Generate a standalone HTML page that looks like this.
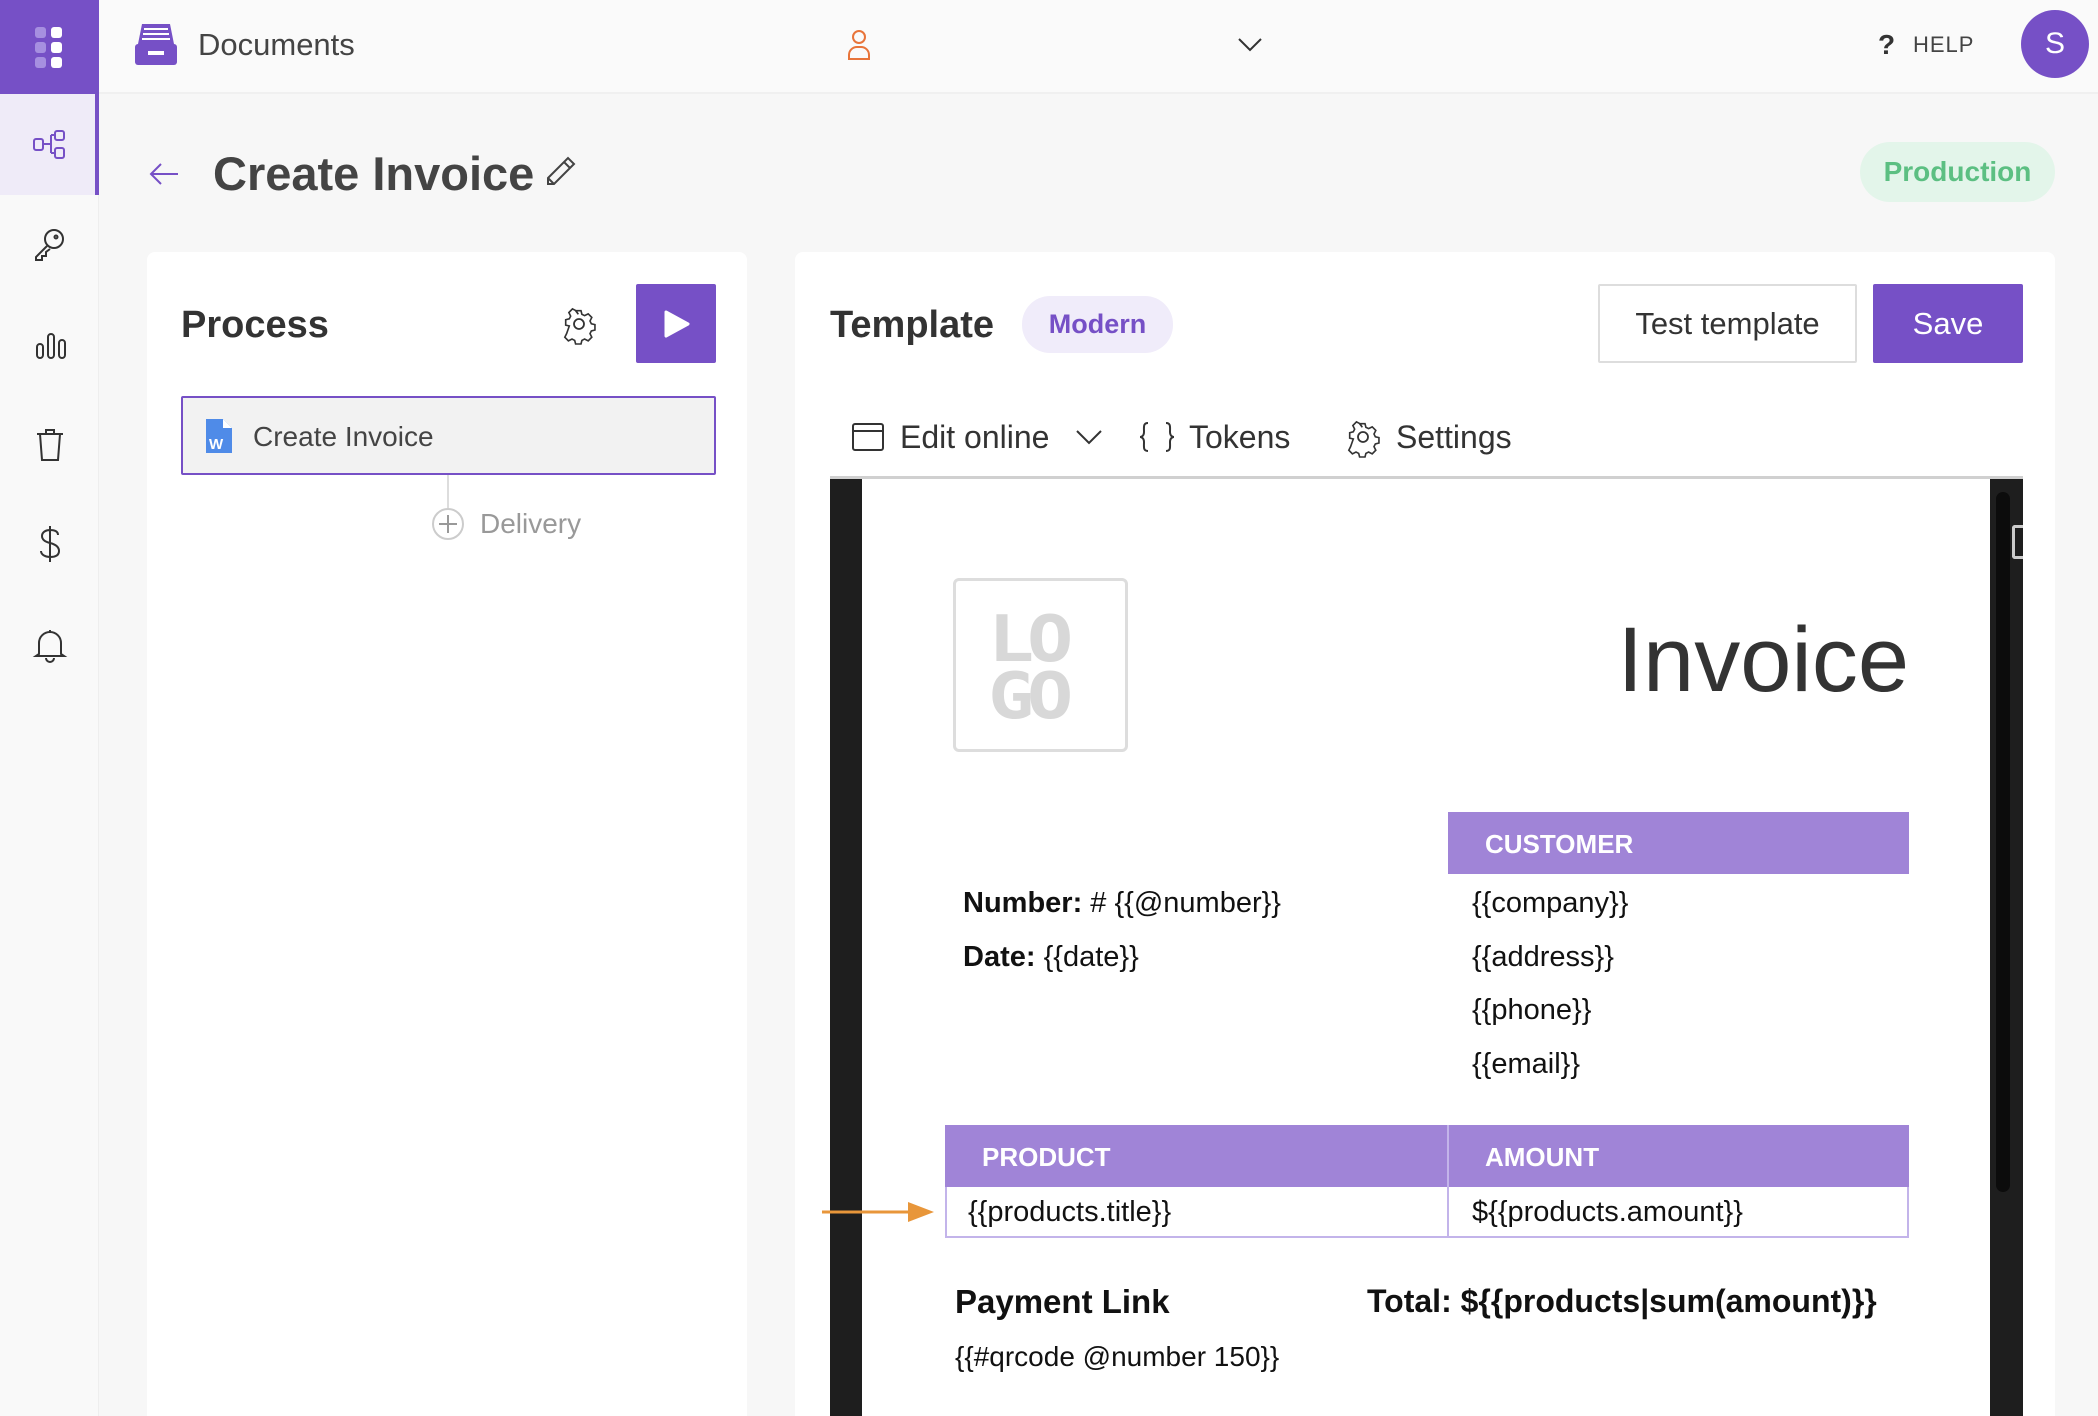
<!DOCTYPE html>
<html style="width:2098px;height:1416px;overflow:hidden"><head><meta charset="utf-8"><style>
*{margin:0;padding:0;box-sizing:border-box}
body{width:2098px;height:1416px;background:#f7f7f7;font-family:"Liberation Sans",sans-serif;position:relative;overflow:hidden;color:#333}
.a{position:absolute}
.t{position:absolute;white-space:nowrap;line-height:1}
svg{position:absolute;overflow:visible}
</style></head><body>
<!-- sidebar -->
<div class="a" style="left:0;top:0;width:99px;height:1416px;background:#f9f9f9;border-right:1px solid #eee"></div>
<div class="a" style="left:0;top:0;width:99px;height:94px;background:#7650c6"></div>
<div class="a" style="left:35px;top:27px;width:11px;height:11px;border-radius:3px;background:#a68fe0"></div>
<div class="a" style="left:51px;top:27px;width:11px;height:11px;border-radius:3px;background:#fff"></div>
<div class="a" style="left:35px;top:42px;width:11px;height:11px;border-radius:3px;background:#a68fe0"></div>
<div class="a" style="left:51px;top:42px;width:11px;height:11px;border-radius:3px;background:#fff"></div>
<div class="a" style="left:35px;top:57px;width:11px;height:11px;border-radius:3px;background:#a68fe0"></div>
<div class="a" style="left:51px;top:57px;width:11px;height:11px;border-radius:3px;background:#fff"></div>
<div class="a" style="left:0;top:94px;width:99px;height:101px;background:#efebf8;border-right:4px solid #7650c6"></div>
<svg style="left:33px;top:130px" width="34" height="30" fill="none" stroke="#7650c6" stroke-width="2"><rect x="1" y="9" width="9" height="11" rx="2"/><rect x="22" y="1" width="9" height="9" rx="2"/><rect x="22" y="18" width="9" height="10" rx="2"/><path d="M10 14h8M18 5v18M18 5h4M18 23h4"/></svg>
<svg style="left:33px;top:228px" width="34" height="34" fill="none" stroke="#333" stroke-width="2"><circle cx="21" cy="11" r="9"/><path d="M14 18L3 29v3h6v-4h4v-4l4-3"/><circle cx="23" cy="9" r="1.5"/></svg>
<svg style="left:36px;top:330px" width="30" height="30" fill="none" stroke="#333" stroke-width="2"><rect x="1" y="14" width="6" height="14" rx="3"/><rect x="12" y="4" width="6" height="24" rx="3"/><rect x="23" y="10" width="6" height="18" rx="3"/></svg>
<svg style="left:36px;top:428px" width="28" height="34" fill="none" stroke="#333" stroke-width="2"><path d="M1 6h26M10 6V2h8v4M4 6l2 26h16l2-26"/></svg>
<svg style="left:38px;top:526px" width="24" height="36" fill="none" stroke="#333" stroke-width="2"><path d="M12 0v36M20 9c0-4-4-5-8-5s-8 2-8 6 4 6 8 7 9 3 9 8-5 6-9 6-9-2-9-6"/></svg>
<svg style="left:34px;top:628px" width="32" height="34" fill="none" stroke="#333" stroke-width="2"><path d="M16 2v3M5 26V15a11 11 0 0 1 22 0v11l3 2H2zM12 30a4 4 0 0 0 8 0"/></svg>
<!-- topbar -->
<div class="a" style="left:99px;top:0;width:1999px;height:94px;background:#fafafa;border-bottom:2px solid #f0f0f0"></div>
<svg style="left:134px;top:22px" width="44" height="44"><path d="M8 2h28l4 20H4z" fill="#7650c6"/><path d="M10 7h24M9 12h26M8 17h28" stroke="#fff" stroke-width="2"/><rect x="1" y="22" width="42" height="21" rx="3" fill="#7650c6"/><rect x="14" y="29" width="16" height="4" fill="#fff"/></svg>
<div class="t" style="left:198px;top:29px;font-size:31px;color:#444">Documents</div>
<svg style="left:848px;top:30px" width="22" height="30" fill="none" stroke="#e8743a" stroke-width="2"><circle cx="11" cy="7" r="6"/><path d="M1 29v-4a8 8 0 0 1 8-8h4a8 8 0 0 1 8 8v4z"/></svg>
<svg style="left:1238px;top:38px" width="24" height="14" fill="none" stroke="#333" stroke-width="2"><path d="M1 1l11 11 11-11"/></svg>
<div class="t" style="left:1878px;top:31px;font-size:28px;font-weight:bold;color:#333">?</div>
<div class="t" style="left:1913px;top:34px;font-size:22px;color:#444;letter-spacing:1px">HELP</div>
<div class="a" style="left:2021px;top:10px;width:68px;height:68px;border-radius:50%;background:#7650c6;color:#fff;font-size:30px;text-align:center;line-height:68px">S</div>
<!-- title -->
<svg style="left:149px;top:162px" width="30" height="24" fill="none" stroke="#7650c6" stroke-width="2"><path d="M29 12H2M12 2L2 12l10 10"/></svg>
<div class="t" style="left:213px;top:150px;font-size:47px;font-weight:bold;color:#444">Create Invoice</div>
<svg style="left:544px;top:154px" width="34" height="34" fill="none" stroke="#444" stroke-width="2"><path d="M4 24L24 4l6 6-20 20H4zM20 8l6 6M4 24l6 6"/></svg>
<div class="a" style="left:1860px;top:142px;width:195px;height:60px;border-radius:30px;background:#e3f5ea;color:#5cbf82;font-size:28px;font-weight:bold;text-align:center;line-height:60px">Production</div>
<!-- process card -->
<div class="a" style="left:147px;top:252px;width:600px;height:1164px;background:#fff;border-radius:8px 8px 0 0"></div>
<div class="t" style="left:181px;top:306px;font-size:38px;font-weight:bold;color:#333">Process</div>
<svg style="left:563px;top:308px" width="32" height="32" fill="none" stroke="#333" stroke-width="1.8"><path d="M13 2h6l1 4 3 1.5 4-2 4 4-2 4 1.5 3 4 1v6l-4 1-1.5 3 2 4-4 4-4-2-3 1.5-1 4h-6l-1-4-3-1.5-4 2-4-4 2-4L6 19l-4-1v-6l4-1 1.5-3-2-4 4-4 4 2L16 6z" transform="scale(.9) translate(1 1)"/><circle cx="16" cy="16" r="5"/></svg>
<div class="a" style="left:636px;top:284px;width:80px;height:79px;background:#7650c6;border-radius:2px"></div>
<svg style="left:664px;top:310px" width="26" height="28"><path d="M2 2l22 12L2 26z" fill="#fff" stroke="#fff" stroke-width="3" stroke-linejoin="round"/></svg>
<div class="a" style="left:181px;top:396px;width:535px;height:79px;background:#f2f2f2;border:2px solid #7650c6;border-radius:2px"></div>
<svg style="left:206px;top:419px" width="26" height="34"><path d="M0 0h17l9 9v25H0z" fill="#4f8be8"/><path d="M17 0v9h9" fill="#fff"/><text x="3" y="30" font-size="15" font-weight="bold" fill="#fff" font-family="Liberation Sans">W</text></svg>
<div class="t" style="left:253px;top:423px;font-size:28px;color:#444">Create Invoice</div>
<div class="a" style="left:447px;top:475px;width:2px;height:33px;background:#ddd"></div>
<svg style="left:431px;top:507px" width="34" height="34" fill="none" stroke="#ccc" stroke-width="2"><circle cx="17" cy="17" r="15"/><path d="M17 8v18M8 17h18" stroke="#999"/></svg>
<div class="t" style="left:480px;top:510px;font-size:28px;color:#999">Delivery</div>
<!-- template card -->
<div class="a" style="left:795px;top:252px;width:1260px;height:1164px;background:#fff;border-radius:8px 8px 0 0"></div>
<div class="t" style="left:830px;top:306px;font-size:38px;font-weight:bold;color:#333">Template</div>
<div class="a" style="left:1022px;top:296px;width:151px;height:57px;border-radius:28px;background:#f0ecfa;color:#7650c6;font-size:27px;font-weight:bold;text-align:center;line-height:57px">Modern</div>
<div class="a" style="left:1598px;top:284px;width:259px;height:79px;border:2px solid #ddd;border-radius:2px;font-size:31px;text-align:center;line-height:75px;color:#333">Test template</div>
<div class="a" style="left:1873px;top:284px;width:150px;height:79px;background:#7650c6;border-radius:2px;font-size:31px;text-align:center;line-height:79px;color:#fff">Save</div>
<svg style="left:852px;top:423px" width="32" height="28" fill="none" stroke="#333" stroke-width="2"><rect x="1" y="1" width="30" height="26" rx="2"/><path d="M1 8h30"/></svg>
<div class="t" style="left:900px;top:421px;font-size:32px;color:#333">Edit online</div>
<svg style="left:1076px;top:430px" width="26" height="14" fill="none" stroke="#333" stroke-width="2"><path d="M1 1l12 12 12-12"/></svg>
<svg style="left:1139px;top:422px" width="36" height="30" fill="none" stroke="#333" stroke-width="2"><path d="M9 1C4 1 5 5 5 10s-4 5-4 5 4 0 4 5-1 9 4 9M27 1c5 0 4 4 4 9s4 5 4 5-4 0-4 5 1 9-4 9"/></svg>
<div class="t" style="left:1189px;top:421px;font-size:32px;color:#333">Tokens</div>
<svg style="left:1347px;top:421px" width="32" height="32" fill="none" stroke="#333" stroke-width="1.8"><path d="M13 2h6l1 4 3 1.5 4-2 4 4-2 4 1.5 3 4 1v6l-4 1-1.5 3 2 4-4 4-4-2-3 1.5-1 4h-6l-1-4-3-1.5-4 2-4-4 2-4L6 19l-4-1v-6l4-1 1.5-3-2-4 4-4 4 2L16 6z" transform="scale(.9) translate(1 1)"/><circle cx="16" cy="16" r="5"/></svg>
<div class="t" style="left:1396px;top:421px;font-size:32px;color:#333">Settings</div>
<!-- doc frame -->
<div class="a" style="left:830px;top:476px;width:1193px;height:940px;background:#1e1e1e;border-top:3px solid #d0d0d0"></div>
<div class="a" style="left:862px;top:479px;width:1128px;height:937px;background:#fff"></div>
<div class="a" style="left:1996px;top:492px;width:14px;height:700px;border-radius:7px;background:#0c0c0c"></div>
<div class="a" style="left:2012px;top:525px;width:11px;height:34px;border:3px solid #ccc;border-right:none;border-radius:3px 0 0 3px"></div>
<div class="a" style="left:953px;top:578px;width:175px;height:174px;border:3px solid #ddd;border-radius:6px"></div>
<div class="t" style="left:988px;top:612px;font-size:64px;font-weight:bold;color:#d8d8d8;font-family:'DejaVu Sans Mono',monospace;line-height:57px;letter-spacing:-6px;transform:scaleX(1.2);transform-origin:left">LO<br>GO</div>
<div class="t" style="right:189px;top:614px;font-size:92px;color:#333">Invoice</div>
<div class="a" style="left:1448px;top:812px;width:461px;height:62px;background:#a084d7"></div>
<div class="t" style="left:1485px;top:831px;font-size:26px;font-weight:bold;color:#fff">CUSTOMER</div>
<div class="t" style="left:963px;top:889px;font-size:29px;color:#111"><b>Number:</b> # {{@number}}</div>
<div class="t" style="left:963px;top:943px;font-size:29px;color:#111"><b>Date:</b> {{date}}</div>
<div class="t" style="left:1472px;top:889px;font-size:29px;color:#111">{{company}}</div>
<div class="t" style="left:1472px;top:943px;font-size:29px;color:#111">{{address}}</div>
<div class="t" style="left:1472px;top:996px;font-size:29px;color:#111">{{phone}}</div>
<div class="t" style="left:1472px;top:1050px;font-size:29px;color:#111">{{email}}</div>
<div class="a" style="left:945px;top:1125px;width:964px;height:113px;border:2px solid #c3b4ea"></div>
<div class="a" style="left:945px;top:1125px;width:964px;height:62px;background:#a084d7"></div>
<div class="a" style="left:1447px;top:1125px;width:2px;height:113px;background:#c3b4ea"></div>
<div class="t" style="left:982px;top:1144px;font-size:26px;font-weight:bold;color:#fff">PRODUCT</div>
<div class="t" style="left:1485px;top:1144px;font-size:26px;font-weight:bold;color:#fff">AMOUNT</div>
<div class="t" style="left:968px;top:1198px;font-size:29px;color:#111">{{products.title}}</div>
<div class="t" style="left:1472px;top:1198px;font-size:29px;color:#111">${{products.amount}}</div>
<svg style="left:822px;top:1200px" width="112" height="24"><path d="M0 12h88" stroke="#e8963a" stroke-width="3"/><path d="M86 2l26 10-26 10z" fill="#e8963a"/></svg>
<div class="t" style="left:955px;top:1285px;font-size:33px;font-weight:bold;color:#111">Payment Link</div>
<div class="t" style="left:1367px;top:1285px;font-size:32px;font-weight:bold;color:#111">Total: ${{products|sum(amount)}}</div>
<div class="t" style="left:955px;top:1343px;font-size:28px;color:#111">{{#qrcode @number 150}}</div>
</body></html>
